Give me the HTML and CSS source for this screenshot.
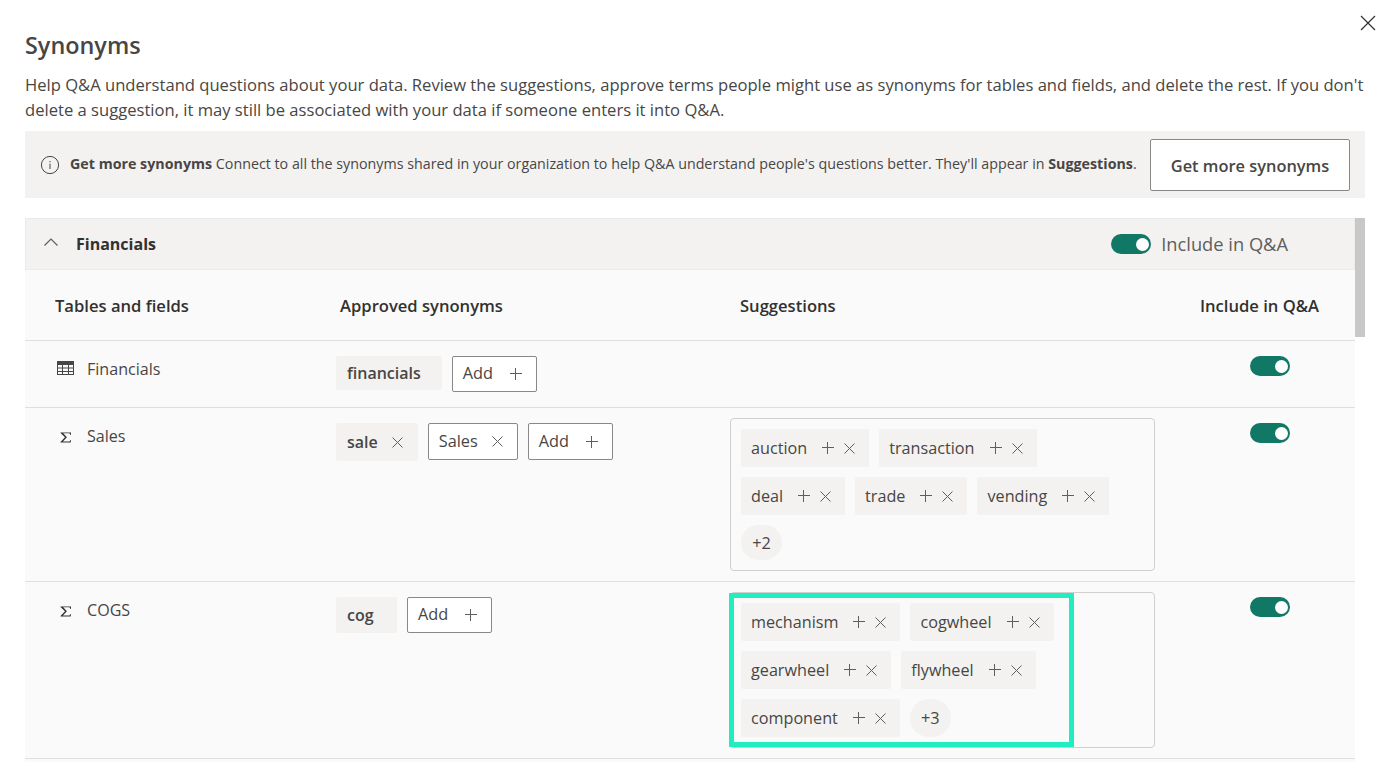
FILE: index.html
```html
<!DOCTYPE html>
<html lang="en">
<head>
<meta charset="utf-8">
<title>Synonyms</title>
<link rel="stylesheet" href="styles.css">
</head>
<body>
<svg class="sprite" width="0" height="0" aria-hidden="true">
  <symbol id="plus" viewBox="0 0 12 12"><path d="M5.5 0v12M0 5.5h12" fill="none" stroke="currentColor"/></symbol>
  <symbol id="cross" viewBox="0 0 11 11"><path d="M0.5 0.5l10 10M10.5 0.5l-10 10" fill="none" stroke="currentColor"/></symbol>
  <symbol id="sigma" viewBox="0 0 12 11"><path d="M0.5 0.5h10.5v2.4h-.6c-.2-1-.6-1.6-1.8-1.6H3.2l3.7 3.9-4 4.4h5.4c1.3 0 1.9-.7 2.2-1.7h.6l-.5 2.6H0.5v-.6l4.5-4.7L0.5 1z" fill="currentColor"/></symbol>
</svg>
<main class="dialog">
  <button class="close" aria-label="Close"><svg width="16" height="16" viewBox="0 0 16 16"><path d="M1 1l14 14M15 1L1 15" fill="none" stroke="#323130" stroke-width="1.2"/></svg></button>
  <h1 class="title">Synonyms</h1>
  <p class="desc">Help Q&amp;A understand questions about your data. Review the suggestions, approve terms people might use as synonyms for tables and fields, and delete the rest. If you don't<br>delete a suggestion, it may still be associated with your data if someone enters it into Q&amp;A.</p>
  <div class="notice">
    <svg class="info" width="20" height="20" viewBox="0 0 20 20"><circle cx="10" cy="10" r="8.6" fill="none" stroke="#484644" stroke-width="1"/><path d="M10 8.6v5.4M10 6v1.2" stroke="#484644" stroke-width="1" fill="none"/></svg>
    <p class="notice-text"><b>Get more synonyms</b> Connect to all the synonyms shared in your organization to help Q&amp;A understand people's questions better. They'll appear in <b>Suggestions</b>.</p>
    <button class="get-more">Get more synonyms</button>
  </div>
  <div class="panel">
    <div class="table">
      <div class="section">
        <svg class="chevron" width="14" height="8" viewBox="0 0 14 8"><path d="M0.5 7.5L7 1l6.5 6.5" fill="none" stroke="#605e5c" stroke-width="1.2"/></svg>
        <span class="section-name">Financials</span>
        <span class="toggle"></span>
        <span class="section-include">Include in Q&amp;A</span>
      </div>
      <div class="row head">
        <div class="head-name">Tables and fields</div>
        <div class="head-approved">Approved synonyms</div>
        <div class="head-sugg">Suggestions</div>
        <div class="head-include">Include in Q&amp;A</div>
      </div>
      <div class="row row-short">
        <div class="name">
          <svg class="table-icon" width="17" height="14" viewBox="0 0 17 14"><path d="M0 0h17v14H0z" fill="#484644"/><path d="M1 4h4v2.5H1zM6 4h5v2.5H6zM12 4h4v2.5h-4zM1 7.5h4V10H1zM6 7.5h5V10H6zM12 7.5h4V10h-4zM1 11h4v2H1zM6 11h5v2H6zM12 11h4v2h-4z" fill="#fafafa"/></svg>
          <span class="name-text">Financials</span>
        </div>
        <div class="approved">
          <span class="syn syn-low">financials</span>
          <button class="add">Add<svg class="ic" width="12" height="12"><use href="#plus"/></svg></button>
        </div>
        <div class="sugg"></div>
        <div class="incl"><span class="toggle"></span></div>
      </div>
      <div class="row">
        <div class="name">
          <svg class="sigma" width="12" height="11"><use href="#sigma"/></svg>
          <span class="name-text">Sales</span>
        </div>
        <div class="approved">
          <span class="syn syn-tall">sale<svg class="ic ic-del" width="11" height="11"><use href="#cross"/></svg></span>
          <button class="add add-tall">Sales<svg class="ic ic-del" width="11" height="11"><use href="#cross"/></svg></button>
          <button class="add add-tall">Add<svg class="ic" width="12" height="12"><use href="#plus"/></svg></button>
        </div>
        <div class="sugg">
          <div class="box">
            <div class="line">
              <span class="chip">auction<svg class="ic" width="12" height="12"><use href="#plus"/></svg><svg class="ic-x" width="11" height="11"><use href="#cross"/></svg></span>
              <span class="chip">transaction<svg class="ic" width="12" height="12"><use href="#plus"/></svg><svg class="ic-x" width="11" height="11"><use href="#cross"/></svg></span>
            </div>
            <div class="line">
              <span class="chip">deal<svg class="ic" width="12" height="12"><use href="#plus"/></svg><svg class="ic-x" width="11" height="11"><use href="#cross"/></svg></span>
              <span class="chip">trade<svg class="ic" width="12" height="12"><use href="#plus"/></svg><svg class="ic-x" width="11" height="11"><use href="#cross"/></svg></span>
              <span class="chip">vending<svg class="ic" width="12" height="12"><use href="#plus"/></svg><svg class="ic-x" width="11" height="11"><use href="#cross"/></svg></span>
            </div>
            <div class="line">
              <span class="more">+2</span>
            </div>
          </div>
        </div>
        <div class="incl"><span class="toggle"></span></div>
      </div>
      <div class="row">
        <div class="name">
          <svg class="sigma" width="12" height="11"><use href="#sigma"/></svg>
          <span class="name-text">COGS</span>
        </div>
        <div class="approved">
          <span class="syn">cog</span>
          <button class="add">Add<svg class="ic" width="12" height="12"><use href="#plus"/></svg></button>
        </div>
        <div class="sugg">
          <div class="box">
            <span class="mark"></span>
            <div class="line">
              <span class="chip">mechanism<svg class="ic" width="12" height="12"><use href="#plus"/></svg><svg class="ic-x" width="11" height="11"><use href="#cross"/></svg></span>
              <span class="chip">cogwheel<svg class="ic" width="12" height="12"><use href="#plus"/></svg><svg class="ic-x" width="11" height="11"><use href="#cross"/></svg></span>
            </div>
            <div class="line">
              <span class="chip">gearwheel<svg class="ic" width="12" height="12"><use href="#plus"/></svg><svg class="ic-x" width="11" height="11"><use href="#cross"/></svg></span>
              <span class="chip">flywheel<svg class="ic" width="12" height="12"><use href="#plus"/></svg><svg class="ic-x" width="11" height="11"><use href="#cross"/></svg></span>
            </div>
            <div class="line">
              <span class="chip">component<svg class="ic" width="12" height="12"><use href="#plus"/></svg><svg class="ic-x" width="11" height="11"><use href="#cross"/></svg></span>
              <span class="more">+3</span>
            </div>
          </div>
        </div>
        <div class="incl"><span class="toggle"></span></div>
      </div>
      <div class="rest"></div>
    </div>
    <div class="scrollbar"><div class="thumb"></div></div>
  </div>
</main>
</body>
</html>
```

FILE: styles.css
```css
* { box-sizing: border-box; }
html, body { margin: 0; height: 100%; overflow: hidden; background: #fff; }
body { font-family: "Open Sans", "Noto Sans", sans-serif; color: #484644; }
.sprite { position: absolute; }
button { font-family: inherit; margin: 0; }

.dialog { position: relative; padding: 30px 18px 0 25px; height: 762px; display: flex; flex-direction: column; }
.close { position: absolute; top: 15px; right: 7px; padding: 0; border: 0; background: none; display: flex; }
.title { margin: 0; font-size: 23.4px; line-height: 30px; font-weight: 600; color: #484644; }
.desc { margin: 12px 0 0; font-size: 16.6px; line-height: 25px; color: #484644; white-space: nowrap; }

.notice { flex: none; margin-top: 9px; height: 67px; background: #f3f2f1; display: flex; align-items: center; padding-left: 15px; }
.info { flex: none; }
.notice-text { margin: -2px 0 0 10px; font-size: 14.27px; white-space: nowrap; flex: 1; color: #484644; }
.notice-text b { font-weight: 700; }
.get-more { flex: none; width: 200px; height: 52px; margin: 0 15px 0 0; padding: 2px 0 0; background: #fff; border: 1px solid #8a8886; border-radius: 2px; font-size: 16.4px; font-weight: 600; color: #484644; }

.panel { margin-top: 20px; flex: 1; display: flex; min-height: 0; }
.table { flex: 1; background: #fafafa; display: flex; flex-direction: column; }
.scrollbar { flex: none; width: 10px; background: #fff; }
.thumb { height: 119px; background: #c8c8c8; }

.section { flex: none; height: 52px; background: #f3f2f1; border: 1px solid #edebe9; display: flex; align-items: center; padding-left: 18px; }
.chevron { flex: none; margin-top: -4px; }
.section-name { margin-left: 18px; font-size: 16px; font-weight: 700; color: #323130; flex: 1; }
.section-include { margin: 0 66px 2px 10px; font-size: 18.3px; color: #605e5c; }

.toggle { flex: none; position: relative; display: block; width: 40px; height: 20px; border-radius: 10px; background: #117865; }
.toggle::after { content: ""; position: absolute; top: 3.5px; right: 2px; width: 13px; height: 13px; border-radius: 50%; background: #fff; }

.row { flex: none; display: grid; grid-template-columns: 311px 394px 425px 200px; border-bottom: 1px solid #e1dfdd; padding: 15px 0 10px; }
.row-short { height: 67px; }
.head { height: 71px; align-items: center; padding: 0; font-size: 16.6px; font-weight: 600; color: #323130; }
.head-name { padding-left: 30px; }
.head-approved { padding-left: 4px; }
.head-sugg { padding-left: 10px; }
.head-include { padding-left: 45px; white-space: nowrap; }

.name { display: flex; align-items: flex-start; padding-left: 32px; font-size: 16.1px; line-height: 26px; height: 28px; color: #484644; }
.table-icon { flex: none; margin-top: 5px; }
.sigma { flex: none; margin: 9px 0 0 3px; color: #323130; }
.name-text { margin-left: 13px; }
.name .sigma + .name-text { margin-left: 15px; }

.approved { display: flex; align-items: flex-start; gap: 10px; }
.syn { display: flex; align-items: center; min-width: 61px; height: 36px; padding: 0 21px 0 11px; background: #f3f2f1; border-radius: 2px; font-size: 16px; font-weight: 600; color: #484644; }
.syn-low { height: 34px; }
.syn-tall { height: 38px; padding-right: 15px; }
.add { display: flex; align-items: center; height: 36px; padding: 0 14px 2px 10px; background: #fff; border: 1px solid #8a8886; border-radius: 2px; font-size: 16.3px; color: #484644; }
.add-tall { height: 37px; }

.ic { flex: none; margin-left: 15px; color: #605e5c; }
.add .ic { margin-left: 17px; margin-top: 2px; }
.ic-del, .add .ic-del { margin-left: 14px; }
.ic-x { flex: none; margin-left: 10px; color: #605e5c; }

.sugg { margin-top: -5px; }
.box { position: relative; display: flex; flex-direction: column; gap: 10px; padding: 10px; background: #fafafa; border: 1px solid #d2d0ce; border-radius: 4px; }
.line { display: flex; gap: 10px; }
.chip { display: flex; align-items: center; height: 38px; padding: 0 14px 0 10px; background: #f3f2f1; border-radius: 2px; font-size: 16.2px; color: #484644; white-space: nowrap; }
.more { display: flex; align-items: center; justify-content: center; width: 41px; min-height: 35px; border-radius: 20px; background: #f3f2f1; font-size: 16.3px; color: #484644; }
.mark { position: absolute; left: -2px; top: 0; width: 345px; height: 154px; border: 5px solid #20edc0; pointer-events: none; }

.incl { display: flex; padding-left: 95px; }

.rest { flex: 1; }
```
